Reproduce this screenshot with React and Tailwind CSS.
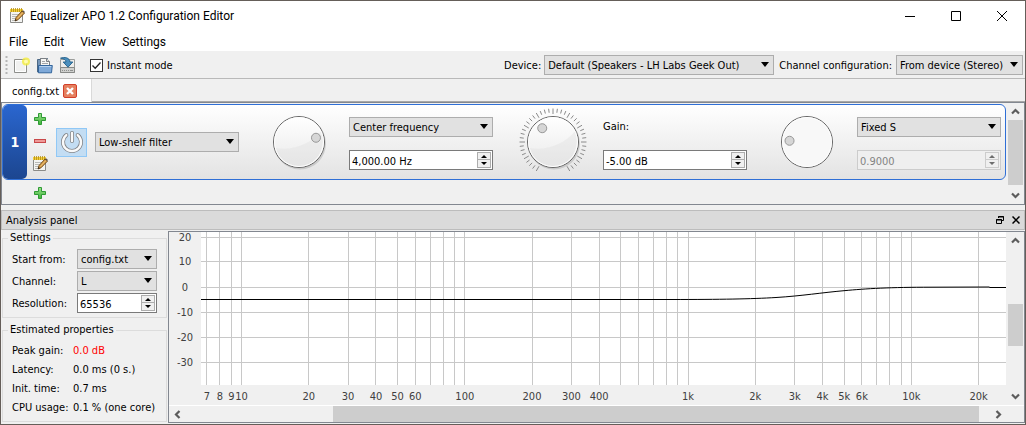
import React from 'react';

const menus = ['File', 'Edit', 'View', 'Settings'];

const PlusIcon = () => (
  <svg width="14" height="14" viewBox="0 0 14 14" aria-hidden="true">
    <defs>
      <linearGradient id="plus" x1="0" y1="0" x2="0" y2="1">
        <stop offset="0" stopColor="#9be08c" />
        <stop offset="1" stopColor="#3fb53a" />
      </linearGradient>
    </defs>
    <path d="M5.5 1.5h3v4h4v3h-4v4h-3v-4h-4v-3h4z" fill="url(#plus)" stroke="#2f9a35" />
  </svg>
);

const MinusIcon = () => (
  <svg width="14" height="14" viewBox="0 0 14 14" aria-hidden="true">
    <rect x="1.5" y="5.5" width="11" height="3" fill="#ee9a98" stroke="#c9484a" />
  </svg>
);

const NotepadIcon = () => (
  <svg width="16" height="16" viewBox="0 0 16 16" aria-hidden="true">
    <path d="M1.5 2.5h12v12h-12z" fill="#f4f4f2" stroke="#8b8b88" />
    <path d="M3 6.5h7M3 8.5h6M3 10.5h4M3 12.5h3" stroke="#b9b9b6" />
    <path d="M1 1h13v3H1z" fill="#f2d13c" />
    <path d="M2.5 0v4M4.5 0v4M6.5 0v4M8.5 0v4M10.5 0v4M12.5 0v4" stroke="#b58c14" strokeWidth="0.8" />
    <path d="M6 13l1-3.4L13 3l2.4 2.2L9 11.8z" fill="#d59a45" stroke="#6b4517" strokeWidth="0.9" />
    <path d="M13 3l1-.8 2 1.8-.8 1.1z" fill="#5d5148" />
    <path d="M6 13l.6-2 1.3 1.2z" fill="#222" />
    <path d="M8.4 10.4l5.4-5.8" stroke="#f2cd86" strokeWidth="0.9" />
  </svg>
);

const NewIcon = () => (
  <svg width="17" height="17" viewBox="0 0 17 17" aria-hidden="true">
    <path d="M1.5 2.5h12v13h-12z" fill="#f1f1f0" stroke="#8e8f8c" />
    <path d="M2.5 3.5h10v11h-10z" fill="none" stroke="#fff" />
    <circle cx="13" cy="4.5" r="4" fill="#f4ec3a" opacity="0.8" />
    <circle cx="13" cy="4.5" r="2" fill="#fffbb0" />
  </svg>
);

const OpenIcon = () => (
  <svg width="17" height="17" viewBox="0 0 17 17" aria-hidden="true">
    <path d="M1.5 15V2.5h3V1.5h7v12z" fill="#7796b8" stroke="#4c6885" />
    <path d="M4.5 1.5h6l3 3v8h-9z" fill="#f6f6f5" stroke="#7b7f83" />
    <path d="M10.5 1.5v3h3" fill="#dcdcda" stroke="#7b7f83" />
    <path d="M6 4.5h3M6 6.5h6" stroke="#a4a6a8" />
    <path d="M2.5 8.5h13.8l-.8 7.3h-13z" fill="#7fa9d8" stroke="#33659c" />
    <path d="M3.5 9.5h11.7" stroke="#b4d0ee" />
  </svg>
);

const SaveIcon = () => (
  <svg width="17" height="17" viewBox="0 0 17 17" aria-hidden="true">
    <path d="M1.5 2.5h14v13h-14z" fill="#ededeb" stroke="#9b9d9b" />
    <path d="M1.5 10.5h14v5h-14z" fill="#cfd0ce" stroke="#878987" />
    <path d="M3 13.5h7" stroke="#8e908e" strokeDasharray="1 1" />
    <path d="M11 13.5h3" stroke="#8e908e" />
    <path d="M1.5 1.2C5.5-.2 10.6.4 11 5h2.8L9 10.2 4.2 5H7c0-2.2-2.2-3.4-5.5-3.8z" fill="#4b8fbd" stroke="#1f5d89" strokeWidth="0.9" />
  </svg>
);

const PowerIcon = () => (
  <svg width="24" height="24" viewBox="0 0 24 24" fill="none" strokeLinecap="round" aria-hidden="true">
    <path d="M6.3 5.1a9 9 0 1 0 11.4 0" stroke="#808387" strokeWidth="4" />
    <path d="M12 3v8" stroke="#808387" strokeWidth="4" />
    <path d="M6.3 5.1a9 9 0 1 0 11.4 0" stroke="#fafafa" strokeWidth="2.4" />
    <path d="M12 3v8" stroke="#fafafa" strokeWidth="2.4" />
  </svg>
);

const Chevron = ({ dir }) => {
  const paths = {
    up: 'M1 6.5L4.5 3 8 6.5',
    down: 'M1 2.5L4.5 6 8 2.5',
    left: 'M6.5 1L3 4.5 6.5 8',
    right: 'M2.5 1L6 4.5 2.5 8',
  };
  return (
    <svg width="9" height="9" viewBox="0 0 9 9" fill="none" aria-hidden="true">
      <path d={paths[dir]} stroke="#5c5c5c" strokeWidth="2.2" />
    </svg>
  );
};

const Select = ({ options, className = '', ...props }) => (
  <div className={`relative h-5 ${className}`}>
    <select
      className="block h-full w-full appearance-none border border-[#adadad] bg-[#e1e1e1] pl-[3px] pr-4 pt-0.5 text-black outline-none"
      {...props}
    >
      {options.map((o) => (
        <option key={o}>{o}</option>
      ))}
    </select>
    <svg className="pointer-events-none absolute right-[5px] top-[7px]" width="8" height="5" viewBox="0 0 8 5" aria-hidden="true">
      <path d="M0 0h8L4 5z" fill="#000" />
    </svg>
  </div>
);

const SpinBox = ({ value, disabled, className = '', ...props }) => {
  const frame = disabled ? 'border-[#cccccc] bg-[#efefef] text-[#838383]' : 'border-[#7a7a7a] bg-white text-black';
  const button = disabled ? 'border-[#cccccc] bg-[#efefef]' : 'border-[#adadad] bg-[#f0f0f0]';
  const arrow = disabled ? '#6d6d6d' : '#000';
  return (
    <div className={`flex h-5 items-center border pr-px ${frame} ${className}`}>
      <input
        type="text"
        defaultValue={value}
        disabled={disabled}
        className="h-full min-w-0 flex-1 bg-transparent pl-0.5 pt-0.5 outline-none"
        {...props}
      />
      <div className="flex w-3.5 shrink-0 flex-col">
        <button type="button" disabled={disabled} aria-label="Increase" className={`flex h-2 items-center justify-center border ${button}`}>
          <svg width="6" height="3" viewBox="0 0 6 3"><path d="M0 3h6L3 0z" fill={arrow} /></svg>
        </button>
        <button type="button" disabled={disabled} aria-label="Decrease" className={`flex h-2 items-center justify-center border border-t-0 ${button}`}>
          <svg width="6" height="3" viewBox="0 0 6 3"><path d="M0 0h6L3 3z" fill={arrow} /></svg>
        </button>
      </div>
    </div>
  );
};

// angle is measured in degrees, clockwise from the top
const Dial = ({ angle, ticks = 0, flat = false }) => {
  const rad = (deg) => (deg * Math.PI) / 180;
  const marks = Array.from({ length: ticks }, (_, i) => -150 + (300 / (ticks - 1)) * i);
  const reach = 17.5;
  return (
    <svg width="68" height="68" viewBox="0 0 68 68" className="justify-self-end" aria-hidden="true">
      <defs>
        <linearGradient id="dial" x1="0" y1="0" x2="0" y2="1">
          <stop offset="0" stopColor="#ffffff" />
          <stop offset="1" stopColor="#e9e9e9" />
        </linearGradient>
      </defs>
      {marks.map((a, i) => {
        const inner = i % 4 === 0 ? 28 : 29.5;
        return (
          <line
            key={a}
            x1={34 + inner * Math.sin(rad(a))}
            y1={34 - inner * Math.cos(rad(a))}
            x2={34 + 33.5 * Math.sin(rad(a))}
            y2={34 - 33.5 * Math.cos(rad(a))}
            stroke="#8a8a8a"
          />
        );
      })}
      {!flat && <circle cx="35" cy="35.5" r="26" fill="#000" opacity="0.13" />}
      <circle cx="34" cy="34" r="25.5" fill={flat ? '#f8f8f8' : 'url(#dial)'} stroke="#666" />
      {!flat && <path d="M10 40c17 3 35-3 47-18 4 18-5 36-23 36-12 0-21-8-24-18z" fill="#dcdcdc" opacity="0.35" />}
      <circle cx="34" cy="34" r="24.5" fill="none" stroke="#fff" />
      <circle
        cx={34 + reach * Math.sin(rad(angle))}
        cy={34 - reach * Math.cos(rad(angle))}
        r="4.5"
        fill="#d6d6d6"
        stroke="#989898"
      />
    </svg>
  );
};

const ScrollBar = ({ horizontal = false, before, thumb, after, className = '' }) => (
  <div className={`flex bg-[#f0f0f0] ${horizontal ? 'h-4 flex-row' : 'w-[15px] flex-col'} ${className}`}>
    <button type="button" aria-label="Scroll back" className={`flex shrink-0 items-center justify-center ${horizontal ? 'w-4' : 'h-[17px]'}`}>
      <Chevron dir={horizontal ? 'left' : 'up'} />
    </button>
    <div style={{ flexGrow: before }} />
    <div className="bg-[#cdcdcd]" style={{ flexGrow: thumb }} />
    <div style={{ flexGrow: after }} />
    <button type="button" aria-label="Scroll forward" className={`flex shrink-0 items-center justify-center ${horizontal ? 'w-4' : 'h-[17px]'}`}>
      <Chevron dir={horizontal ? 'right' : 'down'} />
    </button>
  </div>
);

const gainLines = [
  { y: 5, label: '20' },
  { y: 29, label: '10' },
  { y: 55, label: '0' },
  { y: 80, label: '-10' },
  { y: 105, label: '-20' },
  { y: 130, label: '-30' },
];

const freqLines = [
  7, 8, 9, 10, 20, 30, 40, 50, 60, 70, 80, 90,
  100, 200, 300, 400, 500, 600, 700, 800, 900,
  1000, 2000, 3000, 4000, 5000, 6000, 7000, 8000, 9000, 10000, 20000,
];

const freqLabels = [7, 8, 9, 10, 20, 30, 40, 50, 60, 100, 200, 300, 400, 1000, 2000, 3000, 4000, 5000, 6000, 10000, 20000];

const freqToPercent = (f) => `${((40.5 + 223.3 * (Math.log10(f) - 1)) / 805) * 100}%`;

const Chart = () => (
  <div className="flex">
    <svg className="h-[173px] w-8 shrink-0" fill="#404040">
      {gainLines.map((g) => (
        <text key={g.label} x="16" y={g.y + 4} textAnchor="middle">{g.label}</text>
      ))}
    </svg>
    <svg className="h-[173px] min-w-0 flex-1" fill="#404040">
      <rect width="100%" height="153" fill="#fff" />
      <g stroke="#c8c8c8" shapeRendering="crispEdges">
        {gainLines.map((g) => (
          <line key={g.label} x1="0" x2="100%" y1={g.y + 0.5} y2={g.y + 0.5} />
        ))}
        {freqLines.map((f) => (
          <line key={f} x1={freqToPercent(f)} x2={freqToPercent(f)} y1="0" y2="153" />
        ))}
      </g>
      {freqLabels.map((f) => (
        <text key={f} x={freqToPercent(f)} y="168" textAnchor="middle">
          {f >= 1000 ? `${f / 1000}k` : f}
        </text>
      ))}
      <svg width="100%" height="153" viewBox="0 0 805 153" preserveAspectRatio="none">
        <path
          d="M0 67.5H470C520 67.5 550 67 575 65.5C600 64 622 60.5 643 58.7C665 56.6 690 55.2 730 55.2L788 55L789 55.5H805"
          fill="none"
          stroke="#000"
          vectorEffect="non-scaling-stroke"
        />
      </svg>
    </svg>
  </div>
);

const properties = [
  ['Peak gain:', '0.0 dB', 'text-[#ff0000]'],
  ['Latency:', '0.0 ms (0 s.)', ''],
  ['Init. time:', '0.7 ms', ''],
  ['CPU usage:', '0.1 % (one core)', ''],
];

const App = () => {
  return (
    <div className="w-full border border-[#655e59] bg-[#f0f0f0] font-['DejaVu_Sans_Condensed','DejaVu_Sans',sans-serif] text-[11px] leading-[14px] text-black">
      {/* Title bar */}
      <header className="bg-white font-[Roboto,sans-serif] text-xs">
        <div className="flex h-[30px] items-center pl-2">
          <NotepadIcon />
          <h1 className="ml-[5px] flex-1">Equalizer APO 1.2 Configuration Editor</h1>
          <button type="button" aria-label="Minimize" className="flex h-full w-[46px] items-center justify-center">
            <svg width="10" height="10" viewBox="0 0 10 10"><path d="M0 5.5h10" stroke="#000" /></svg>
          </button>
          <button type="button" aria-label="Maximize" className="flex h-full w-[46px] items-center justify-center">
            <svg width="10" height="10" viewBox="0 0 10 10"><path d="M.5.5h9v9h-9z" fill="none" stroke="#000" /></svg>
          </button>
          <button type="button" aria-label="Close" className="flex h-full w-[46px] items-center justify-center">
            <svg width="10" height="10" viewBox="0 0 10 10"><path d="M0 0l10 10M10 0L0 10" stroke="#000" /></svg>
          </button>
        </div>
        <nav className="flex h-[21px] items-center gap-4 border-b border-[#f0f0f0] pl-2 pt-0.5">
          {menus.map((m) => (
            <button key={m} type="button">{m}</button>
          ))}
        </nav>
      </header>

      {/* Toolbar */}
      <div className="flex h-[27px] items-center border-b border-[#b9b9b9] pl-1 pr-0.5">
        <svg width="3" height="20" viewBox="0 0 3 20" aria-hidden="true">
          <path d="M1.5 1v19" stroke="#b5b5b5" strokeWidth="2" strokeDasharray="2 2" />
        </svg>
        <div className="ml-[5px] flex gap-1.5">
          <button type="button" aria-label="New"><NewIcon /></button>
          <button type="button" aria-label="Open"><OpenIcon /></button>
          <button type="button" aria-label="Save"><SaveIcon /></button>
        </div>
        <label className="ml-3.5 flex items-center gap-1">
          <span className="relative flex">
            <input type="checkbox" defaultChecked className="peer h-[13px] w-[13px] appearance-none border border-[#333333] bg-white" />
            <svg className="pointer-events-none absolute inset-0 hidden peer-checked:block" width="13" height="13" viewBox="0 0 13 13" fill="none">
              <path d="M2.5 6.5l2.7 2.8L10.5 3.5" stroke="#222" strokeWidth="1.3" />
            </svg>
          </span>
          <span className="pt-0.5">Instant mode</span>
        </label>
        <label htmlFor="device" className="ml-auto mr-[3px] pt-0.5">Device:</label>
        <Select id="device" options={['Default (Speakers - LH Labs Geek Out)']} className="w-[230px]" />
        <label htmlFor="channel-config" className="ml-[5px] mr-1 pt-0.5">Channel configuration:</label>
        <Select id="channel-config" options={['From device (Stereo)']} className="w-[127px]" />
      </div>

      {/* Tabs */}
      <div className="flex h-[23px]">
        <div className="flex w-[91px] items-center gap-1 border-r border-[#d9d9d9] bg-white pl-[11px]">
          <span className="pt-0.5">config.txt</span>
          <button type="button" aria-label="Close tab">
            <svg width="14" height="14" viewBox="0 0 14 14">
              <rect x="0.5" y="0.5" width="13" height="13" rx="1.5" fill="#e5805f" stroke="#d2402a" />
              <path d="M4 4l6 6M10 4l-6 6" stroke="#fff" strokeWidth="2.4" />
            </svg>
          </button>
        </div>
        <div className="flex-1 border-b border-[#a8a8a8]" />
      </div>

      {/* Filter list */}
      <main className="flex border border-[#828790]">
        <div className="min-w-0 flex-1 pt-px">
          <div className="flex h-[76px] items-stretch rounded-md border border-[#2f6fd6] bg-linear-to-b from-white to-[#e3e3e3] pr-1">
            <div className="flex w-6 shrink-0 items-center justify-center rounded-[5px] bg-linear-to-b from-[#2a66cf] to-[#1c4690] text-sm font-bold text-white">
              1
            </div>
            <div className="ml-[5px] flex w-4 shrink-0 flex-col items-center justify-center gap-2">
              <button type="button" aria-label="Add filter"><PlusIcon /></button>
              <button type="button" aria-label="Remove filter"><MinusIcon /></button>
              <button type="button" aria-label="Edit as text"><NotepadIcon /></button>
            </div>
            <button
              type="button"
              aria-label="Power"
              aria-pressed="true"
              className="ml-2 flex h-[29px] w-[31px] shrink-0 items-center justify-center self-center border border-[#90c8f6] bg-[#c3ddf3]"
            >
              <PowerIcon />
            </button>
            <div className="ml-2 grid flex-1 grid-cols-[1fr_78px_1fr_78px_1fr_78px_1fr] items-center gap-x-4">
              <Select aria-label="Filter type" options={['Low-shelf filter']} />
              <Dial angle={76} />
              <div className="flex flex-col gap-[13px] pt-[3px]">
                <Select aria-label="Frequency type" options={['Center frequency']} />
                <SpinBox aria-label="Frequency" value="4,000.00 Hz" />
              </div>
              <Dial angle={-38} ticks={41} />
              <div className="flex flex-col gap-[13px] pt-[3px]">
                <label htmlFor="gain" className="h-5 leading-5">Gain:</label>
                <SpinBox id="gain" value="-5.00 dB" />
              </div>
              <Dial angle={-86} flat />
              <div className="flex flex-col gap-[13px] pt-[3px]">
                <Select aria-label="Slope type" options={['Fixed S']} />
                <SpinBox aria-label="Slope" value="0.9000" disabled />
              </div>
            </div>
          </div>
          <div className="flex h-6 items-center pl-[31px] pt-0.5">
            <button type="button" aria-label="Add filter at end"><PlusIcon /></button>
          </div>
        </div>
        <ScrollBar before={0} thumb={65} after={2} className="ml-0.5 mr-px" />
      </main>

      {/* Analysis panel */}
      <section className="mt-[5px] pb-px">
        <div className="flex h-5 items-center border border-[#bcbcbc] bg-[#dadada] pl-1 pr-1">
          <h2 className="flex-1 pt-0.5">Analysis panel</h2>
          <button type="button" aria-label="Float panel" className="mr-2">
            <svg width="8" height="8" viewBox="0 0 8 8" fill="none" stroke="#000">
              <path d="M2.5 2V.5h5v4H6" />
              <path d="M2 1h6" />
              <path d="M.5 3.5h5v4h-5zM0 4h6" />
            </svg>
          </button>
          <button type="button" aria-label="Close panel">
            <svg width="8" height="8" viewBox="0 0 8 8"><path d="M.5.5l7 7M7.5.5l-7 7" stroke="#000" strokeWidth="1.5" /></svg>
          </button>
        </div>

        <div className="mt-px flex">
          <div className="ml-px mr-px flex w-[165px] shrink-0 flex-col gap-[5px]">
            <fieldset className="border border-[#dcdcdc] px-[9px] pb-1 pt-1">
              <legend className="-ml-1 px-0.5">Settings</legend>
              <div className="grid grid-cols-[65px_80px] items-center gap-y-0.5">
                <label htmlFor="start-from" className="pt-0.5">Start from:</label>
                <Select id="start-from" options={['config.txt']} />
                <label htmlFor="channel" className="pt-0.5">Channel:</label>
                <Select id="channel" options={['L']} />
                <label htmlFor="resolution" className="pt-0.5">Resolution:</label>
                <SpinBox id="resolution" value="65536" />
              </div>
            </fieldset>
            <fieldset className="border border-[#dcdcdc] px-[9px] pb-1 pt-1">
              <legend className="-ml-1 px-0.5">Estimated properties</legend>
              <dl className="grid grid-cols-[61px_1fr] whitespace-nowrap leading-[19px]">
                {properties.map(([name, value, color]) => (
                  <React.Fragment key={name}>
                    <dt>{name}</dt>
                    <dd className={color}>{value}</dd>
                  </React.Fragment>
                ))}
              </dl>
            </fieldset>
          </div>

          <div className="flex min-w-0 flex-1 flex-col border border-[#828790]">
            <div className="flex border-b border-white">
              <div className="min-w-0 flex-1">
                <Chart />
              </div>
              <ScrollBar before={56} thumb={42} after={43} className="ml-0.5 mr-px" />
            </div>
            <div className="flex">
              <ScrollBar horizontal before={148} thumb={646} after={11} className="flex-1" />
              <div className="w-[18px]" />
            </div>
          </div>
        </div>
      </section>
    </div>
  );
};

export default App;
